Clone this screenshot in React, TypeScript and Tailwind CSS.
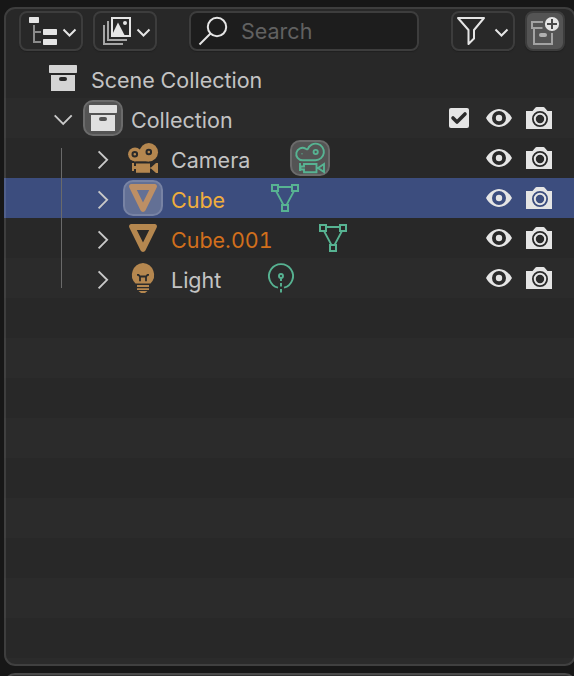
import type { ReactNode } from "react";

const INK = "#e5e5e5";
const GREEN = "#57b392";

function Button({ className, children }: { className: string; children: ReactNode }) {
  return (
    <div className={`flex h-10 shrink-0 items-start overflow-hidden rounded-[8px] border-2 border-[#3d3d3d] shadow-[0_1px_1px_#202020] ${className}`}>
      {children}
    </div>
  );
}

function Caret() {
  return <path d="M0 0l6 6 6-6" fill="none" stroke={INK} strokeWidth="2" />;
}

function DisplayModeIcon() {
  return (
    <svg width="60" height="36" viewBox="21 13 60 36">
      <path d="M34 25v17h7M34 32h7" fill="none" stroke="#8b8b8b" strokeWidth="2" />
      <g fill={INK}>
        <rect x="29" y="17" width="10" height="6" rx=".7" />
        <rect x="43" y="29" width="14" height="6" rx=".7" />
        <rect x="43" y="39" width="14" height="6" rx=".7" />
      </g>
      <g transform="translate(63.5 29.5)"><Caret /></g>
    </svg>
  );
}

function ImagesIcon() {
  return (
    <svg width="60" height="36" viewBox="95 13 60 36">
      <g fill="none" stroke="#a6a6a6" strokeWidth="2">
        <path d="M104 25v19h19" />
        <path d="M108 21v19h19" />
      </g>
      <rect x="112" y="18" width="18" height="18" fill="none" stroke={INK} strokeWidth="2" />
      <path d="M111.500 36l6.500-13.500 7 13.500z" fill={INK} />
      <circle cx="125" cy="23" r="2" fill={INK} />
      <g transform="translate(137.500 29.500)"><Caret /></g>
    </svg>
  );
}

function SearchIcon() {
  return (
    <svg width="44" height="36" viewBox="191 13 44 36" fill="none" stroke={INK} strokeWidth="2">
      <circle cx="217" cy="27" r="9.200" />
      <path d="M210.500 33.500L199.500 44.500" />
    </svg>
  );
}

function FilterIcon() {
  return (
    <svg width="60" height="36" viewBox="453 13 60 36">
      <path d="M458 18h26l-10 12v8.500l-5.500 5.500V30z" fill="none" stroke={INK} strokeWidth="2" strokeLinejoin="round" />
      <g transform="translate(495.500 29.500)"><Caret /></g>
    </svg>
  );
}

function NewCollectionIcon() {
  return (
    <svg width="36" height="36" viewBox="527 13 36 36">
      <g fill="none" stroke="#a3a3a3" strokeWidth="2">
        <path d="M543 22h-11v6h10.500" />
        <path d="M534 28v16h18v-11" />
      </g>
      <rect x="539" y="33" width="8" height="4" rx="2" fill="#b0b0b0" />
      <circle cx="552" cy="24" r="7.100" fill={INK} />
      <path d="M552 19v10M547 24h10" stroke="#4a4a4a" strokeWidth="2" />
    </svg>
  );
}

function CollectionIcon({ boxed }: { boxed?: boolean }) {
  return (
    <svg className="h-10 w-10 shrink-0" viewBox="0 0 40 40">
      {boxed && <rect x="1" y="3" width="38" height="34" rx="9" fill="#545454" stroke="#6b6b6b" strokeWidth="2" />}
      <g fill={boxed ? "#e0e0e0" : "#d4d4d4"}>
        <rect x="6" y="7" width="28" height="8" rx=".7" />
        <path fillRule="evenodd" d="M8 17h24v16H8zM18 19a2 2 0 0 0 0 4h4a2 2 0 0 0 0-4z" />
      </g>
    </svg>
  );
}

function CameraObjectIcon() {
  return (
    <svg className="h-10 w-10 shrink-0" viewBox="0 0 40 40">
      <g fill="#b5874f">
        <circle cx="12" cy="16.300" r="6.900" />
        <circle cx="25.800" cy="14.200" r="9.200" />
        <rect x="11" y="16" width="15" height="7.300" />
        <path d="M9 25h2v3h2v-2.500h14v4l1 0 5-4.500h2v10h-2l-5-4.500h-1v4.200H13V31h-2v2H9z" />
      </g>
      <g fill="#b5874f" stroke="#292929" strokeWidth="2">
        <circle cx="11.800" cy="16.200" r="2.300" />
        <circle cx="25.800" cy="14" r="2.300" />
      </g>
    </svg>
  );
}

function MeshObjectIcon({ active }: { active?: boolean }) {
  return (
    <svg className="h-10 w-10 shrink-0" viewBox="0 0 40 40">
      {active && <rect x="1" y="3" width="38" height="34" rx="9" fill="#637095" stroke="#7883a4" strokeWidth="2" />}
      <path
        fillRule="evenodd"
        fill={active ? "#bd8f65" : "#b5874f"}
        d="M8.500 6h23a2.400 2.400 0 0 1 2.200 3.500L22.400 32.500a2.700 2.700 0 0 1-4.800 0L6.300 9.500A2.400 2.400 0 0 1 8.500 6zM13.800 12L20 24.500 26.200 12z"
      />
    </svg>
  );
}

function LightObjectIcon() {
  return (
    <svg className="h-10 w-10 shrink-0" viewBox="0 0 40 40">
      <path d="M20 5A12 12 0 0 0 12.500 25.500H27.500A12 12 0 0 0 20 5z" fill="#b5874f" />
      <path d="M14 16.800h1.500l1.500 1.700h6l1.500-1.700H26M17 18v5.200M23 18v5.200" fill="none" stroke="#2b2b2b" strokeWidth="1.800" />
      <path d="M14 28h12M14 31.200h12" stroke="#b5874f" strokeWidth="1.800" />
      <path d="M15.500 33h9l-2.500 2h-4z" fill="#b5874f" />
    </svg>
  );
}

function CameraDataIcon() {
  return (
    <svg className="h-10 w-10 shrink-0" viewBox="0 0 40 40" fill="none" stroke={GREEN} strokeWidth="1.900">
      <rect x="1" y="3" width="38" height="34" rx="9" fill="#545454" stroke="#6b6b6b" strokeWidth="2" />
      <path d="M12.500 22.200H25.500A8.300 8.300 0 1 0 17.800 11Q16.800 11.800 15.500 10.600A6.200 6.200 0 1 0 12.500 22.200z" />
      <circle cx="25.700" cy="14" r="2.100" />
      <circle cx="12" cy="15.800" r=".2" strokeWidth="1.200" />
      <path d="M14 26h12.500v8.200H14V31.500h-3.500v-3H14zM10 25v8M28 30l6-4v8z" />
    </svg>
  );
}

function MeshDataIcon() {
  return (
    <svg className="h-10 w-10 shrink-0" viewBox="0 0 40 40" fill="none" stroke={GREEN} strokeWidth="2">
      <path d="M13 9h14M11 13l7.500 14M29 13l-7.500 14" strokeWidth="1.800" />
      <rect x="7" y="7" width="6" height="6" />
      <rect x="27" y="7" width="6" height="6" />
      <rect x="17" y="27" width="6" height="6" />
    </svg>
  );
}

function LightDataIcon() {
  return (
    <svg className="h-10 w-10 shrink-0" viewBox="0 0 40 40" fill="none" stroke={GREEN} strokeWidth="1.900">
      <path d="M17 29.700a12 12 0 1 1 6 0" />
      <circle cx="20" cy="18" r="2" />
      <path d="M20 20.500v2.500M20 25v3.500M20 31v3.500" />
    </svg>
  );
}

function Disclosure({ open }: { open?: boolean }) {
  return (
    <svg className="h-10 w-10 shrink-0" viewBox="0 0 40 40" fill="none" stroke="#c9c9c9" strokeWidth="1.900">
      <path d={open ? "M11.700 17.300l8.500 8.500 8.500-8.500" : "M15.600 13.300l8.500 8.500-8.500 8.500"} />
    </svg>
  );
}

function CheckIcon() {
  return (
    <svg className="h-10 w-10 shrink-0" viewBox="0 0 40 40">
      <rect x="10" y="10" width="20" height="20" rx="2" fill={INK} />
      <path d="M14 20l4 4 8-8" fill="none" stroke="#2b2b2b" strokeWidth="3.600" strokeLinecap="round" strokeLinejoin="round" />
    </svg>
  );
}

function EyeIcon() {
  return (
    <svg className="h-10 w-10 shrink-0" viewBox="0 0 40 40">
      <path fillRule="evenodd" fill={INK} d="M7 20c3-5.500 8-9 13-9s10 3.500 13 9c-3 5.500-8 9-13 9s-10-3.500-13-9zM20 13a7 7 0 1 0 0 14 7 7 0 0 0 0-14z" />
      <circle cx="20" cy="20" r="3.200" fill={INK} />
    </svg>
  );
}

function RenderIcon() {
  return (
    <svg className="h-10 w-10 shrink-0" viewBox="0 0 40 40">
      <path fillRule="evenodd" fill={INK} d="M7 13h6.500l3-3.500q.5-.5 1-.5h7q.5 0 1 .5l3 3.500H33v18H7zM21 13a8 8 0 1 0 0 16 8 8 0 0 0 0-16z" />
      <circle cx="21" cy="21" r="5.200" fill="none" stroke={INK} strokeWidth="2" />
    </svg>
  );
}

type RowProps = {
  tone: string;
  color: string;
  depth: string;
  open?: boolean;
  disclosure?: boolean;
  icon: ReactNode;
  name: string;
  dataIcon?: ReactNode;
  checked?: boolean;
  toggles?: boolean;
};

function Row({ tone, color, depth, open, disclosure = true, icon, name, dataIcon, checked, toggles = true }: RowProps) {
  return (
    <div className={`flex h-10 shrink-0 items-center pr-[17px] ${tone} ${depth}`}>
      {disclosure && <Disclosure open={open} />}
      {icon}
      <span className={`ml-2 whitespace-nowrap pt-1 text-[21.5px] leading-9 tabular-nums ${color}`}>{name}</span>
      {dataIcon && <div className="ml-10">{dataIcon}</div>}
      {toggles && (
        <div className="ml-auto flex">
          {checked && <CheckIcon />}
          <EyeIcon />
          <RenderIcon />
        </div>
      )}
    </div>
  );
}

const TEXT = "text-[#c3c3c3]";

export default function App() {
  return (
    <div className="h-[676px] w-[574px] overflow-hidden bg-[#171717] pl-1 pt-[7px] font-['Inter',sans-serif]">
      <div className="relative flex h-[659px] w-[572px] flex-col overflow-hidden rounded-[11px] bg-[#2b2b2b]">
        <div className="flex h-[51px] shrink-0 items-start bg-[#282828] pl-[15px] pt-1">
          <Button className="w-16"><DisplayModeIcon /></Button>
          <Button className="ml-[10px] w-16"><ImagesIcon /></Button>
          <Button className="ml-8 w-[230px] bg-[#1d1d1d]">
            <SearchIcon />
            <span className="ml-[6px] text-[21.5px] leading-9 text-[#616161]">Search</span>
          </Button>
          <Button className="ml-8 w-16"><FilterIcon /></Button>
          <Button className="ml-[10px] w-10 bg-[#545454]"><NewCollectionIcon /></Button>
        </div>
        <Row tone="bg-[#282828]" depth="pl-[39px]" color={TEXT} disclosure={false} icon={<CollectionIcon />} name="Scene Collection" toggles={false} />
        <Row tone="bg-[#2b2b2b]" depth="pl-[39px]" color={TEXT} open icon={<CollectionIcon boxed />} name="Collection" checked />
        <Row tone="bg-[#282828]" depth="pl-[79px]" color={TEXT} icon={<CameraObjectIcon />} name="Camera" dataIcon={<CameraDataIcon />} />
        <Row tone="bg-[#3c4d7e]" depth="pl-[79px]" color="text-[#f0ad3d]" icon={<MeshObjectIcon active />} name="Cube" dataIcon={<MeshDataIcon />} />
        <Row tone="bg-[#282828]" depth="pl-[79px]" color="text-[#d16f1c]" icon={<MeshObjectIcon />} name="Cube.001" dataIcon={<MeshDataIcon />} />
        <Row tone="bg-[#2b2b2b]" depth="pl-[79px]" color={TEXT} icon={<LightObjectIcon />} name="Light" dataIcon={<LightDataIcon />} />
        {Array.from({ length: 9 }, (_, i) => (
          <div key={i} className="h-10 shrink-0 odd:bg-[#2b2b2b] even:bg-[#282828]" />
        ))}
        <div className="absolute left-[57px] top-[141px] h-[140px] w-px bg-[#6a6a6a]" />
        <div className="pointer-events-none absolute inset-0 rounded-[11px] border-2 border-white/10" />
      </div>
      <div className="mt-[7px] h-10 w-[572px] rounded-[11px] border-2 border-[#4a4a4a] bg-[#303030]" />
    </div>
  );
}
